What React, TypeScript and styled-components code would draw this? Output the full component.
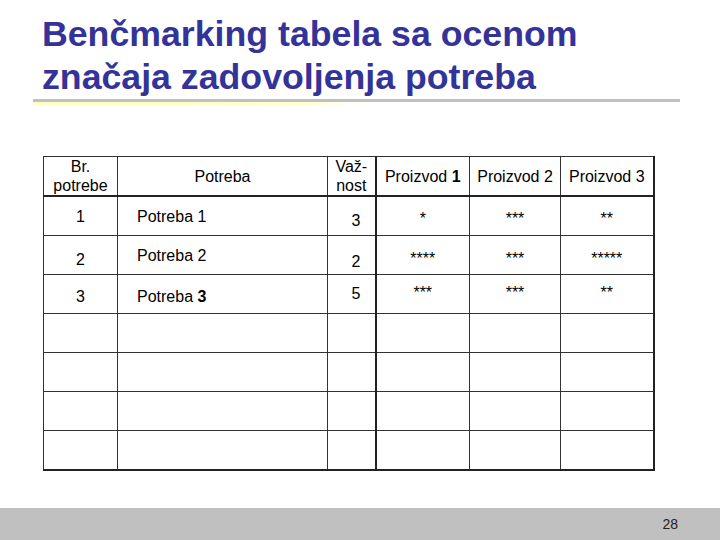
import * as React from 'react'
import styled, { createGlobalStyle } from 'styled-components'

const GlobalStyle = createGlobalStyle`
    html, body {
        margin: 0;
        padding: 0;
        background: #ffffff;
    }
`

const StyledDivSlide = styled.div`
    width: 720px;
    height: 540px;
    display: flex;
    flex-direction: column;
    background-color: white;
    font-family: "Liberation Sans", Arial, sans-serif;
    overflow: hidden;
`
const StyledH1Title = styled.h1`
    margin: 0;
    padding: 13px 0 0 42px;
    font-size: 35.7px;
    line-height: 43px;
    font-weight: bold;
    color: #333399;
`
const StyledDivRule = styled.div`
    margin: 0 40px 0 33px;
    display: flex;
    flex-direction: column;
`
const StyledDivGrayBar = styled.div`
    height: 3px;
    background-color: #c0c0c0;
`
const StyledDivYellowBar = styled.div`
    width: 330px;
    height: 3px;
    background: linear-gradient(to right, #ffffc0 0%, #ffffc8 80%, #ffffff 100%);
`
const StyledDivTableWrap = styled.div`
    margin-top: 51px;
    padding-left: 43px;
`
const StyledTable = styled.table`
    border-collapse: collapse;
    table-layout: fixed;
    width: 610px;
    font-size: 16px;
    line-height: 19px;
    color: #000;
    border-left: 1px solid #333;
    border-top: 1px solid #333;
    border-right: 2px solid #222;
    border-bottom: 2px solid #222;
`
const StyledTh = styled.th<{ $thick?: boolean }>`
    height: 36px;
    padding: 0;
    font-weight: normal;
    text-align: center;
    vertical-align: middle;
    border-left: 1px solid #333;
    border-right: ${p => p.$thick ? '2px solid #222' : '1px solid #333'};
    border-bottom: 2px solid #222;
`
const StyledTd = styled.td<{ $align?: string, $thick?: boolean }>`
    height: 38px;
    padding: 0;
    text-align: ${p => p.$align || 'center'};
    vertical-align: top;
    border: 1px solid #333;
    border-right: ${p => p.$thick ? '2px solid #222' : '1px solid #333'};
`
const StyledSpanCell = styled.span<{ $top: number, $left?: number, $right?: number }>`
    display: block;
    padding-top: ${p => p.$top}px;
    padding-left: ${p => p.$left || 0}px;
    padding-right: ${p => p.$right || 0}px;
`
const StyledDivFooter = styled.div`
    margin-top: auto;
    height: 32px;
    background-color: #c0c0c0;
    display: flex;
    justify-content: flex-end;
    align-items: center;
    padding-right: 42px;
    font-size: 14px;
    color: #222;
`

interface IRow {
    no: string,
    name: string,
    bold?: boolean,
    weight: string,
    stars: string[],
    top: number[],
}

const rows: IRow[] = [
    { no: '1', name: 'Potreba 1', weight: '3', stars: ['*', '***', '**'], top: [10, 10, 14, 12] },
    { no: '2', name: 'Potreba 2', weight: '2', stars: ['****', '***', '*****'], top: [14, 10, 16, 13] },
    { no: '3', name: 'Potreba 3', bold: true, weight: '5', stars: ['***', '***', '**'], top: [12, 12, 9, 8] },
]

const cols = [74, 210, 48, 94, 91, 93]

const App: React.FC = function () {
    return (
        <StyledDivSlide>
            <GlobalStyle />
            <StyledH1Title>
                Benčmarking tabela sa ocenom<br />značaja zadovoljenja potreba
            </StyledH1Title>
            <StyledDivRule>
                <StyledDivGrayBar />
                <StyledDivYellowBar />
            </StyledDivRule>
            <StyledDivTableWrap>
                <StyledTable>
                    <colgroup>
                        {cols.map((w, i) => <col key={i} style={{ width: w }} />)}
                    </colgroup>
                    <thead>
                        <tr>
                            <StyledTh>Br.<br />potrebe</StyledTh>
                            <StyledTh>Potreba</StyledTh>
                            <StyledTh $thick>Važ-<br />nost</StyledTh>
                            <StyledTh>Proizvod <b>1</b></StyledTh>
                            <StyledTh>Proizvod 2</StyledTh>
                            <StyledTh>Proizvod 3</StyledTh>
                        </tr>
                    </thead>
                    <tbody>
                        {rows.map(r => (
                            <tr key={r.no}>
                                <StyledTd><StyledSpanCell $top={r.top[0]}>{r.no}</StyledSpanCell></StyledTd>
                                <StyledTd $align='left'>
                                    <StyledSpanCell $top={r.top[1]} $left={19}>
                                        Potreba {r.bold ? <b>{r.no}</b> : r.no}
                                    </StyledSpanCell>
                                </StyledTd>
                                <StyledTd $align='right' $thick>
                                    <StyledSpanCell $top={r.top[2]} $right={14}>{r.weight}</StyledSpanCell>
                                </StyledTd>
                                {r.stars.map((s, i) => (
                                    <StyledTd key={i}><StyledSpanCell $top={r.top[3]}>{s}</StyledSpanCell></StyledTd>
                                ))}
                            </tr>
                        ))}
                        {[0, 1, 2, 3].map(i => (
                            <tr key={'e' + i}>
                                <StyledTd /><StyledTd /><StyledTd $thick /><StyledTd /><StyledTd /><StyledTd />
                            </tr>
                        ))}
                    </tbody>
                </StyledTable>
            </StyledDivTableWrap>
            <StyledDivFooter>28</StyledDivFooter>
        </StyledDivSlide>
    )
}

export default App
